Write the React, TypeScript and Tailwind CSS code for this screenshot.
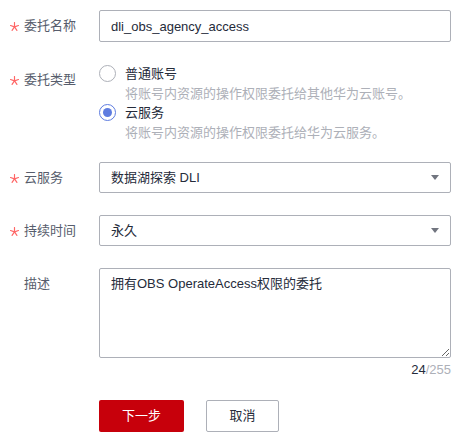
import { useState } from "react";

const font = "font-['Liberation_Sans','Noto_Sans_CJK_SC',sans-serif]";

function Star() {
  return (
    <svg width="9" height="9" viewBox="0 0 10 10" className="mt-[1px]">
      <path
        d="M5 5.4L5 0.6M5 5.4L9.4 3.9M5 5.4L7.7 9.3M5 5.4L2.3 9.3M5 5.4L0.6 3.9"
        fill="none"
        stroke="#f66"
        strokeWidth="1.3"
        strokeLinecap="round"
      />
    </svg>
  );
}

function Label({ text, required = true, className = "" }: { text: string; required?: boolean; className?: string }) {
  return (
    <div className={`flex w-[89px] shrink-0 items-center text-[13px] text-[#575d6c] ${className}`}>
      <span className="flex w-[14px] items-center">{required && <Star />}</span>
      <span>{text}</span>
    </div>
  );
}

function Radio({ checked, label, hint, onClick }: { checked: boolean; label: string; hint: string; onClick: () => void }) {
  return (
    <div className="cursor-pointer" onClick={onClick}>
      <div className="flex h-[19px] items-center">
        <span
          className={`flex h-[17px] w-[17px] items-center justify-center rounded-full border bg-white ${
            checked ? "border-[#5e7ce0]" : "border-[#adb0b8]"
          }`}
        >
          {checked && <span className="h-[9px] w-[9px] rounded-full bg-[#5e7ce0]" />}
        </span>
        <span className="ml-[9px] text-[13px] text-[#252b3a]">{label}</span>
      </div>
      <div className="h-[20px] pl-[26px] text-[13px] leading-[22px] text-[#adb0b8]">{hint}</div>
    </div>
  );
}

function Select({ value }: { value: string }) {
  return (
    <div className="flex h-[31px] w-[352px] items-center justify-between rounded-[2px] border border-[#adb0b8] bg-white pl-[11px] pr-[11px] text-[13px] text-[#252b3a]">
      <span>{value}</span>
      <svg width="8" height="5" viewBox="0 0 8 5">
        <path d="M0 0H8L4 5Z" fill="#71757f" />
      </svg>
    </div>
  );
}

export default function App() {
  const [type, setType] = useState("cloud");
  const [desc, setDesc] = useState("拥有OBS OperateAccess权限的委托");

  return (
    <div className={`h-[447px] w-[471px] bg-white ${font}`}>
      <div className="flex flex-col pt-[10px] pl-[10px]">
        <div className="flex items-center">
          <Label text="委托名称" />
          <input
            className="h-[32px] w-[352px] rounded-[2px] border border-[#adb0b8] px-[11px] text-[13px] text-[#252b3a] outline-none"
            defaultValue="dli_obs_agency_access"
          />
        </div>

        <div className="mt-[22px] flex items-start">
          <Label text="委托类型" className="mt-[6px]" />
          <div className="flex flex-col">
            <Radio
              checked={type === "account"}
              label="普通账号"
              hint="将账号内资源的操作权限委托给其他华为云账号。"
              onClick={() => setType("account")}
            />
            <Radio
              checked={type === "cloud"}
              label="云服务"
              hint="将账号内资源的操作权限委托给华为云服务。"
              onClick={() => setType("cloud")}
            />
          </div>
        </div>

        <div className="mt-[20px] flex items-center">
          <Label text="云服务" />
          <Select value="数据湖探索 DLI" />
        </div>

        <div className="mt-[22px] flex items-center">
          <Label text="持续时间" />
          <Select value="永久" />
        </div>

        <div className="mt-[22px] flex items-start">
          <Label text="描述" required={false} className="mt-[6px]" />
          <div className="flex w-[352px] flex-col">
            <textarea
              className="h-[90px] w-[352px] rounded-[2px] border border-[#adb0b8] px-[11px] py-[5px] text-[13px] leading-[20px] text-[#252b3a] outline-none"
              value={desc}
              onChange={(e) => setDesc(e.target.value)}
            />
            <div className="mt-[4px] text-right text-[13px] leading-[16px]">
              <span className="text-[#252b3a]">{desc.length}</span>
              <span className="text-[#adb0b8]">/255</span>
            </div>
          </div>
        </div>

        <div className="mt-[22px] flex gap-[22px] pl-[89px]">
          <button className="h-[32px] w-[85px] rounded-[2px] bg-[#c7000b] text-[13px] text-white">下一步</button>
          <button className="h-[32px] w-[73px] rounded-[2px] border border-[#adb0b8] bg-white text-[13px] text-[#252b3a]">
            取消
          </button>
        </div>
      </div>
    </div>
  );
}
